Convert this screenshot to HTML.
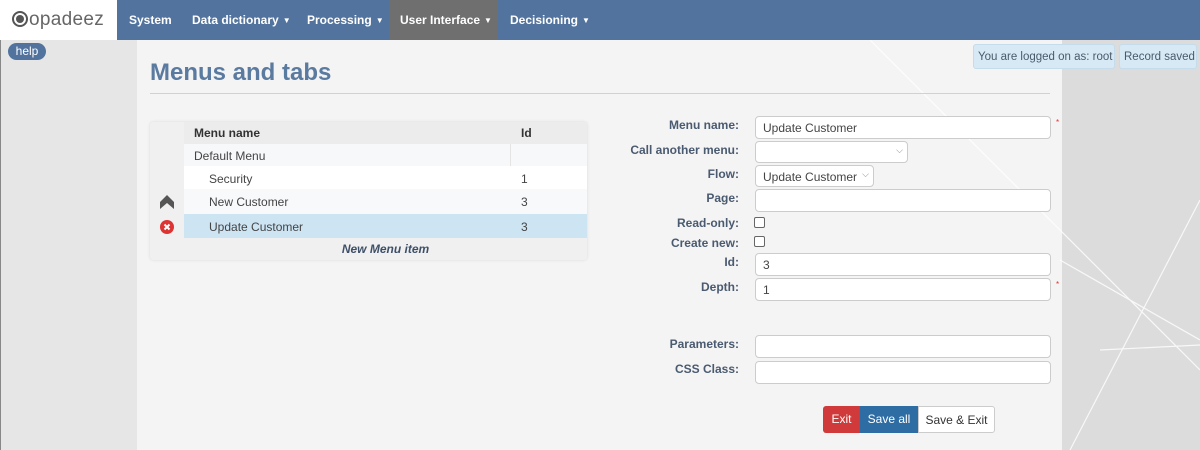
<!DOCTYPE html>
<html><head><meta charset="utf-8"><style>
*{box-sizing:border-box}
body{margin:0;width:1200px;height:450px;overflow:hidden;font-family:"Liberation Sans",Arial,sans-serif;background:#dcdcdc;position:relative;font-size:12px;color:#333}
.nav{position:absolute;left:0;top:0;width:1200px;height:40px;background:#51739e}
.logo{position:absolute;left:0;top:0;width:117px;height:40px;background:#fff;font-size:19px;color:#666;padding:9px 0 0 12px;letter-spacing:0.3px}
.logo b{display:inline-block;width:16px;height:16px;border:2px solid #555;border-radius:50%;vertical-align:-2px;position:relative;margin-right:1px}
.logo b:after{content:"";position:absolute;left:2px;top:2px;width:8px;height:8px;border-radius:50%;background:#555}
.ni{position:absolute;top:0;height:40px;line-height:40px;color:#fff;font-weight:bold;font-size:12px}
.ni i{font-style:normal;font-size:8px;margin-left:4px;vertical-align:1px}
.side{position:absolute;left:0;top:40px;width:137px;height:410px;background:#e6e6e6;border-left:1px solid #888}
.help{position:absolute;left:8px;top:43px;width:38px;height:17px;border-radius:9px;background:#51739e;color:#fff;font-size:12px;text-align:center;line-height:16px}
.main{position:absolute;left:137px;top:40px;width:925px;height:410px;background:#f4f4f4}
h1{position:absolute;left:150px;top:59px;margin:0;font-size:24px;color:#5a7aa0;font-weight:bold}
.hr{position:absolute;left:150px;top:93px;width:900px;height:1px;background:#c8d3dd}
.badge{position:absolute;top:44px;height:25px;line-height:24px;background:#d6e9f5;border:1px solid #c4dcec;border-radius:3px;color:#4a5a6a;font-size:11.5px;padding:0 4px;white-space:nowrap;overflow:hidden}
.tbl{position:absolute;left:150px;top:122px;width:437px;height:138px;background:#f0f0f0;border-radius:3px;box-shadow:0 0 3px rgba(0,0,0,.1)}
.r{position:absolute;left:34px;width:403px;font-size:12px;color:#444}
.r span{position:absolute}
.lbl{position:absolute;right:461px;width:200px;text-align:right;font-weight:bold;color:#4a5a70;font-size:12px}
.in{position:absolute;left:755px;background:#fff;border:1px solid #ccc;border-radius:4px;height:23px;font-size:12px;padding:4px 7px;color:#444}
.cb{position:absolute;left:754px;width:11px;height:11px;border:1px solid #666;border-radius:2px;background:#fff}
.req{position:absolute;left:1056px;color:#d33;font-size:8px}
.btn{position:absolute;top:406px;height:27px;line-height:27px;font-size:12px;text-align:center}
</style></head><body>
<div class="nav"></div>
<div class="logo"><b></b>opadeez</div>
<div class="ni" style="left:129px">System</div>
<div class="ni" style="left:192px">Data dictionary<i>▼</i></div>
<div class="ni" style="left:307px">Processing<i>▼</i></div>
<div class="ni" style="left:389px;width:109px;background:#6f6f6f;padding-left:11px">User Interface<i>▼</i></div>
<div class="ni" style="left:510px">Decisioning<i>▼</i></div>
<div class="side"></div>
<div class="help">help</div>
<div class="main"></div>
<svg style="position:absolute;left:0;top:40px" width="1200" height="410"><g stroke="#fff" stroke-width="1.2" fill="none" opacity=".8"><line x1="870" y1="0" x2="1200" y2="330"/><line x1="1060" y1="220" x2="1200" y2="300"/><line x1="1200" y1="160" x2="1070" y2="410"/><line x1="1100" y1="310" x2="1200" y2="305"/></g></svg>
<h1>Menus and tabs</h1>
<div class="hr"></div>
<div class="badge" style="left:973px;width:142px">You are logged on as: root</div>
<div class="badge" style="left:1119px;width:78px">Record saved</div>
<div class="tbl">
<div class="r" style="top:0;height:22px;background:#ececec;font-weight:bold;color:#333"><span style="left:10px;top:4px">Menu name</span><span style="left:337px;top:4px">Id</span></div>
<div class="r" style="top:22px;height:22px;background:#f7f8fa"><span style="left:10px;top:5px">Default Menu</span><span style="left:326px;top:0;width:1px;height:22px;background:#e4e4e4"></span></div>
<div class="r" style="top:44px;height:23px;background:#fff"><span style="left:25px;top:6px">Security</span><span style="left:337px;top:6px">1</span></div>
<div class="r" style="top:67px;height:25px;background:#f7f9fb"><span style="left:25px;top:6px">New Customer</span><span style="left:337px;top:6px">3</span></div>
<div class="r" style="top:92px;height:24px;background:#cde4f3"><span style="left:25px;top:6px">Update Customer</span><span style="left:337px;top:6px">3</span></div>
<div class="r" style="top:116px;height:22px;text-align:center;font-weight:bold;font-style:italic;color:#3e5068;line-height:22px">New Menu item</div>
<svg style="position:absolute;left:9px;top:73px" width="16" height="14"><path d="M8 0 L15 7 L15 14 L8 8 L1 14 L1 7Z" fill="#555"/></svg>
<svg style="position:absolute;left:10px;top:98px" width="14" height="14"><circle cx="7" cy="7" r="7" fill="#d33"/><path d="M4.5 4.5L9.5 9.5M9.5 4.5L4.5 9.5" stroke="#fff" stroke-width="2"/></svg>
</div>
<div class="lbl" style="top:118px">Menu name:</div><div class="in" style="top:116px;width:296px">Update Customer</div><div class="req" style="top:118px">*</div>
<div class="lbl" style="top:143px">Call another menu:</div><div class="in" style="top:141px;width:153px;height:22px"><span style="position:absolute;right:4px;top:3px;font-size:9px;color:#888">⌵</span></div>
<div class="lbl" style="top:167px">Flow:</div><div class="in" style="top:165px;width:119px;height:22px">Update Customer<span style="position:absolute;right:4px;top:3px;font-size:9px;color:#888">⌵</span></div>
<div class="lbl" style="top:191px">Page:</div><div class="in" style="top:189px;width:296px"></div>
<div class="lbl" style="top:216px">Read-only:</div><div class="cb" style="top:217px"></div>
<div class="lbl" style="top:236px">Create new:</div><div class="cb" style="top:236px"></div>
<div class="lbl" style="top:255px">Id:</div><div class="in" style="top:253px;width:296px">3</div>
<div class="lbl" style="top:280px">Depth:</div><div class="in" style="top:278px;width:296px">1</div><div class="req" style="top:280px">*</div>
<div class="lbl" style="top:337px">Parameters:</div><div class="in" style="top:335px;width:296px"></div>
<div class="lbl" style="top:362px">CSS Class:</div><div class="in" style="top:361px;width:296px"></div>
<div class="btn" style="left:823px;width:37px;background:#d03a3a;color:#fff;border-radius:3px 0 0 3px">Exit</div>
<div class="btn" style="left:860px;width:58px;background:#2e6da4;color:#fff">Save all</div>
<div class="btn" style="left:918px;width:77px;background:#fff;border:1px solid #ccc;border-radius:0 3px 3px 0;color:#333">Save &amp; Exit</div>
</body></html>
